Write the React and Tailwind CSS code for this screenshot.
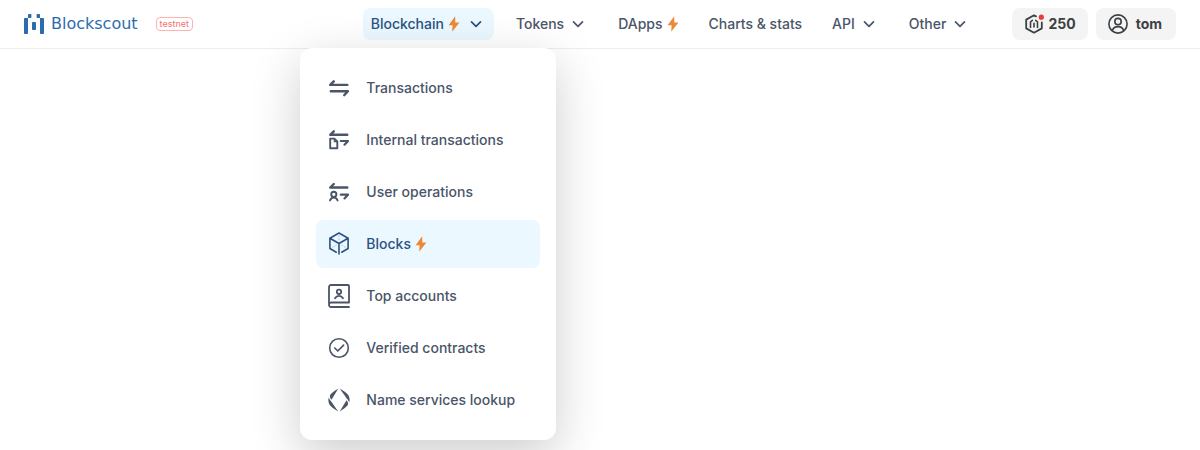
import React from "react";

const stroke = {
  fill: "none",
  stroke: "currentColor",
  strokeWidth: 2,
  strokeLinecap: "round",
  strokeLinejoin: "round",
};

function MenuIcon({ children }) {
  return (
    <svg viewBox="0 0 30 30" className="size-[30px] shrink-0" aria-hidden="true" {...stroke}>
      {children}
    </svg>
  );
}

const icons = {
  transactions: (
    <MenuIcon>
      <path d="M23.300 11.900H6.200l3.600-3.600M6.800 18.200h17.100l-3.700 4" strokeWidth="2.400" />
    </MenuIcon>
  ),
  internal: (
    <MenuIcon>
      <path d="M23.300 9.800H6.200l3.600-3.500" strokeWidth="2.400" />
      <path d="M16.800 16h7.200l-3.500 3.700" strokeWidth="2.200" />
      <path d="M6.200 13.600h4.200l2.900 2.800v6.900H6.200z" strokeWidth="1.900" />
      <path d="M10.300 13.600v3h3" strokeWidth="1.200" />
    </MenuIcon>
  ),
  user: (
    <MenuIcon>
      <path d="M23.300 10.500H6.200l3.600-3.500" strokeWidth="2.400" />
      <path d="M16.800 17.700h7.200l-3.500 3.700" strokeWidth="2.200" />
      <circle cx="9.800" cy="17.300" r="2.600" strokeWidth="1.900" />
      <path d="M6 23.400c.8-2 2-2.900 3.800-2.900s3 .9 3.800 2.900" strokeWidth="1.900" />
    </MenuIcon>
  ),
  blocks: (
    <MenuIcon>
      <path d="M12.300 23.200 5.900 19.500V9.200L15 4l9.100 5.200v10.300l-6.400 3.700M5.900 9.200 15 14.500l9.100-5.300M15 14.500v10.400" strokeWidth="1.600" />
      <path d="M15 6.500v6M8.500 18.300l4.500-2.600M21.500 18.300 17 15.700" strokeWidth="0.800" strokeDasharray="1.500 1.500" opacity="0.35" />
    </MenuIcon>
  ),
  accounts: (
    <MenuIcon>
      <path d="M25 26H7a2 2 0 0 1-2-2V6a2 2 0 0 1 2-2h17a1 1 0 0 1 1 1v16.500H7a2 2 0 0 0-2 2" strokeWidth="1.800" />
      <circle cx="15" cy="10.800" r="2.200" strokeWidth="1.800" />
      <path d="M11 17.200c.9-1.600 2.200-2.400 4-2.400s3.100.8 4 2.400" strokeWidth="1.800" />
    </MenuIcon>
  ),
  verified: (
    <MenuIcon>
      <circle cx="15" cy="15" r="9.300" strokeWidth="1.600" />
      <path d="m10.800 15 3 3 5.800-5.800" strokeWidth="1.700" />
    </MenuIcon>
  ),
  names: (
    <MenuIcon>
      <g fill="currentColor" stroke="none">
        <path d="M14.300 3.500 7.500 14.700C6.500 13.700 5.700 12 6 10.400 6.500 8.600 10.500 5.800 14.300 3.500Z" />
        <path d="M4.900 12.200c-1.200 3-.5 6.800 2.200 9.200 1.700 1.600 4.600 3.500 7.100 5.100-2-3.200-4.600-6.500-6.400-9.300C6.400 15.300 5 14.200 4.900 12.200Z" />
        <path d="M15.700 26.500l6.800-11.200c1 1 1.800 2.700 1.500 4.300-.5 1.800-4.500 4.600-8.300 6.900Z" />
        <path d="M25.100 17.800c1.200-3 .5-6.800-2.200-9.200-1.700-1.600-4.600-3.500-7.100-5.100 2 3.200 4.600 6.500 6.400 9.300 1.400 1.900 2.800 3 2.900 5Z" />
      </g>
    </MenuIcon>
  ),
};

function Bolt() {
  return (
    <svg viewBox="0 0 12 16" className="h-4 w-3 shrink-0 fill-[#ed8936]" aria-hidden="true">
      <path d="M7.200.2.600 9.200h4L4.200 15.800l7.200-9.300H7.300z" />
    </svg>
  );
}

function Chevron() {
  return (
    <svg viewBox="0 0 20 20" className="size-5 shrink-0" aria-hidden="true" {...stroke}>
      <path d="m5.500 7.900 4.500 4.400 4.500-4.400" strokeWidth="1.700" />
    </svg>
  );
}

const menu = [
  { icon: "transactions", label: "Transactions" },
  { icon: "internal", label: "Internal transactions" },
  { icon: "user", label: "User operations" },
  { icon: "blocks", label: "Blocks", active: true, bolt: true },
  { icon: "accounts", label: "Top accounts" },
  { icon: "verified", label: "Verified contracts" },
  { icon: "names", label: "Name services lookup" },
];

function BlockchainMenu() {
  return (
    <ul className="absolute top-full left-1/2 z-10 mt-2 flex w-64 -translate-x-1/2 flex-col gap-1 rounded-xl bg-white p-4 shadow-[0_15px_50px_rgba(0,0,0,0.2)]">
      {menu.map(({ icon, label, active, bolt }) => (
        <li key={label}>
          <a
            href="#"
            className={`flex h-12 items-center gap-3 rounded-lg px-2 ${
              active ? "bg-[#ebf8ff] text-[#2c5282]" : "text-[#4a5568]"
            }`}
          >
            {icons[icon]}
            <span className="flex items-center gap-1 whitespace-nowrap">
              {label}
              {bolt && <Bolt />}
            </span>
          </a>
        </li>
      ))}
    </ul>
  );
}

function NavButton({ label, active, bolt, children }) {
  return (
    <li className="relative">
      <button
        type="button"
        aria-expanded={Boolean(active)}
        className={`flex h-8 items-center rounded-lg px-2 ${active ? "bg-[#ebf8ff] text-[#2c5282]" : ""}`}
      >
        <span className="flex items-center gap-1">
          {label}
          {bolt && <Bolt />}
        </span>
        <span className={bolt ? "ml-1.5" : "ml-1"}>
          <Chevron />
        </span>
      </button>
      {children}
    </li>
  );
}

function NavLink({ label, bolt }) {
  return (
    <li>
      <a href="#" className="flex h-8 items-center gap-1 rounded-lg px-2">
        {label}
        {bolt && <Bolt />}
      </a>
    </li>
  );
}

function Logo() {
  return (
    <a href="#" className="flex items-center gap-[7px] text-[#2b6cb0]">
      <svg viewBox="0 0 20 20" className="size-5 fill-current" aria-hidden="true">
        <path d="M4 .7C4 .3 4.300 0 4.700 0h2c.4 0 .7.300.7.700v2.600c0 .4-.3.700-.7.700H4v15.300c0 .4-.3.700-.7.700H.7c-.4 0-.7-.3-.7-.7V4.700c0-.4.300-.7.700-.7H4z" />
        <path d="M16 .7c0-.4-.3-.7-.7-.7h-2c-.4 0-.7.300-.7.700v2.600c0 .4.300.7.700.7H16v15.300c0 .4.300.7.700.7h2.600c.4 0 .7-.3.700-.7V4.700c0-.4-.3-.7-.7-.7H16z" />
        <rect x="8" y="8" width="4" height="8" rx=".7" />
      </svg>
      <span className="font-['DejaVu_Sans',sans-serif] text-base leading-5 font-normal">Blockscout</span>
    </a>
  );
}

export default function App() {
  return (
    <div className="min-h-screen overflow-hidden bg-white font-['Inter',sans-serif] text-sm font-medium text-[#4a5568]">
      <header className="flex h-[49px] items-center border-b border-[#eeeeee] px-6">
        <Logo />
        <span className="ml-[18px] rounded border border-[#feb2b2] px-[3px] text-[9px] leading-3 font-normal text-[#f87171]">
          testnet
        </span>
        <nav className="ml-auto">
          <ul className="flex gap-3.5">
            <NavButton label="Blockchain" active bolt>
              <BlockchainMenu />
            </NavButton>
            <NavButton label="Tokens" />
            <NavLink label="DApps" bolt />
            <NavLink label="Charts & stats" />
            <NavButton label="API" />
            <NavButton label="Other" />
          </ul>
        </nav>
        <div className="ml-[34px] flex gap-2 font-bold text-[#3d4043]">
          <button type="button" className="flex h-8 items-center gap-1 rounded-lg bg-[#f4f4f4] px-3">
            <svg viewBox="0 0 20 20" className="size-5" aria-hidden="true" {...stroke}>
              <path d="M12 2.400 10 1.300 2.200 5.600v8.800L10 18.700l7.800-4.300V8.500" strokeWidth="1.800" />
              <path d="M6.500 13.500V8L8.300 6.400M13.500 13.500V8l-1.800-1.600M10 9.300v3.700" strokeWidth="1.600" />
              <circle cx="17.300" cy="3.200" r="2.600" fill="#e53e3e" stroke="none" />
            </svg>
            250
          </button>
          <button type="button" className="flex h-8 items-center gap-2 rounded-lg bg-[#f4f4f4] pr-3.5 pl-3">
            <svg viewBox="0 0 20 20" className="size-5" aria-hidden="true" {...stroke} strokeWidth="1.600">
              <circle cx="10" cy="10" r="9.100" />
              <circle cx="10" cy="7.600" r="3.200" />
              <path d="M4.300 16.500c.9-2.500 3-3.900 5.700-3.900s4.800 1.400 5.700 3.900" />
            </svg>
            tom
          </button>
        </div>
      </header>
    </div>
  );
}
